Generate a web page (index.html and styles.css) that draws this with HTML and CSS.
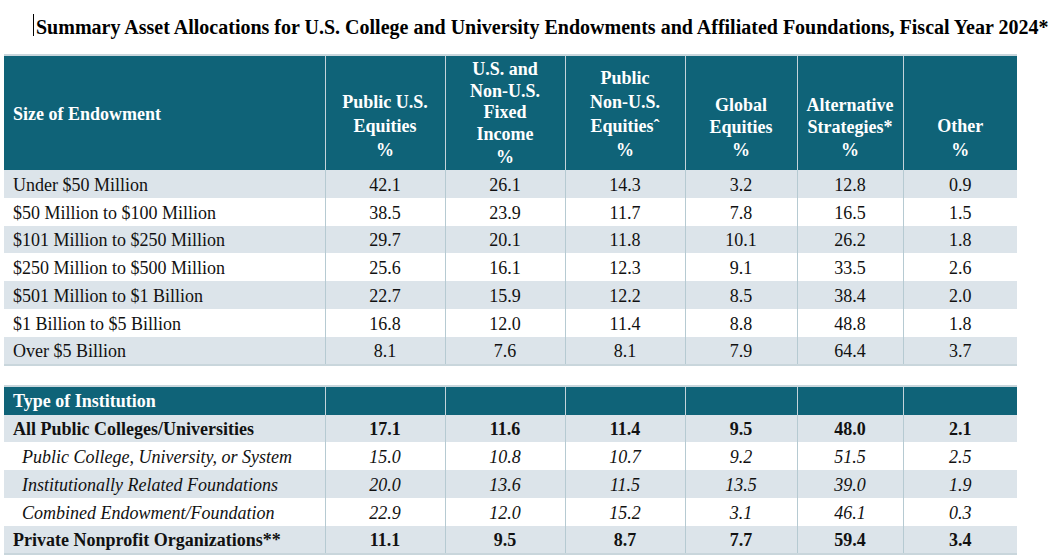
FILE: index.html
```html
<!DOCTYPE html>
<html>
<head>
<meta charset="utf-8">
<link rel="stylesheet" href="styles.css">
</head>
<body>
<div class="page">
  <h1 class="title"><span class="caret"></span>Summary Asset Allocations for U.S. College and University Endowments and Affiliated Foundations, Fiscal Year 2024*</h1>

  <table class="grid">
    <colgroup>
      <col class="c0"><col class="c1"><col class="c2"><col class="c3"><col class="c4"><col class="c5"><col class="c6">
    </colgroup>
    <thead>
      <tr class="head">
        <th class="first mid">Size of Endowment</th>
        <th><div class="lbl">Public U.S.<br>Equities</div><div class="pct">%</div></th>
        <th class="fi"><div class="lbl">U.S. and<br>Non-U.S.<br>Fixed<br>Income</div><div class="pct">%</div></th>
        <th><div class="lbl">Public<br>Non-U.S.<br>Equitiesˆ</div><div class="pct">%</div></th>
        <th><div class="lbl tight">Global<br>Equities</div><div class="pct">%</div></th>
        <th><div class="lbl tight">Alternative<br>Strategies*</div><div class="pct">%</div></th>
        <th><div class="lbl">Other</div><div class="pct">%</div></th>
      </tr>
    </thead>
    <tbody>
      <tr class="shade"><td class="first">Under $50 Million</td><td>42.1</td><td>26.1</td><td>14.3</td><td>3.2</td><td>12.8</td><td>0.9</td></tr>
      <tr><td class="first">$50 Million to $100 Million</td><td>38.5</td><td>23.9</td><td>11.7</td><td>7.8</td><td>16.5</td><td>1.5</td></tr>
      <tr class="shade"><td class="first">$101 Million to $250 Million</td><td>29.7</td><td>20.1</td><td>11.8</td><td>10.1</td><td>26.2</td><td>1.8</td></tr>
      <tr><td class="first">$250 Million to $500 Million</td><td>25.6</td><td>16.1</td><td>12.3</td><td>9.1</td><td>33.5</td><td>2.6</td></tr>
      <tr class="shade"><td class="first">$501 Million to $1 Billion</td><td>22.7</td><td>15.9</td><td>12.2</td><td>8.5</td><td>38.4</td><td>2.0</td></tr>
      <tr><td class="first">$1 Billion to $5 Billion</td><td>16.8</td><td>12.0</td><td>11.4</td><td>8.8</td><td>48.8</td><td>1.8</td></tr>
      <tr class="shade"><td class="first">Over $5 Billion</td><td>8.1</td><td>7.6</td><td>8.1</td><td>7.9</td><td>64.4</td><td>3.7</td></tr>
    </tbody>
  </table>

  <table class="grid second">
    <colgroup>
      <col class="c0"><col class="c1"><col class="c2"><col class="c3"><col class="c4"><col class="c5"><col class="c6">
    </colgroup>
    <thead>
      <tr class="subhead">
        <th class="first">Type of Institution</th><th></th><th></th><th></th><th></th><th></th><th></th>
      </tr>
    </thead>
    <tbody>
      <tr class="shade strong"><td class="first">All Public Colleges/Universities</td><td>17.1</td><td>11.6</td><td>11.4</td><td>9.5</td><td>48.0</td><td>2.1</td></tr>
      <tr class="sub"><td class="first">Public College, University, or System</td><td>15.0</td><td>10.8</td><td>10.7</td><td>9.2</td><td>51.5</td><td>2.5</td></tr>
      <tr class="shade sub"><td class="first">Institutionally Related Foundations</td><td>20.0</td><td>13.6</td><td>11.5</td><td>13.5</td><td>39.0</td><td>1.9</td></tr>
      <tr class="sub"><td class="first">Combined Endowment/Foundation</td><td>22.9</td><td>12.0</td><td>15.2</td><td>3.1</td><td>46.1</td><td>0.3</td></tr>
      <tr class="shade strong"><td class="first">Private Nonprofit Organizations**</td><td>11.1</td><td>9.5</td><td>8.7</td><td>7.7</td><td>59.4</td><td>3.4</td></tr>
    </tbody>
  </table>
</div>
</body>
</html>
```

FILE: styles.css
```css
html, body {
  margin: 0;
  padding: 0;
  background: #ffffff;
}

.page {
  padding: 0 0 0 4px;
  font-family: "Liberation Serif", "Times New Roman", serif;
  color: #111111;
}

.title {
  margin: 0 0 16px 29px;
  padding-top: 16px;
  font-size: 20px;
  line-height: 22px;
  font-weight: bold;
  white-space: nowrap;
  color: #000000;
}

.caret {
  display: inline-block;
  width: 1px;
  height: 22px;
  background: #000000;
  vertical-align: top;
  margin-top: -2px;
  margin-right: 2px;
}

.grid {
  border-collapse: collapse;
  table-layout: fixed;
  width: 1013px;
  font-size: 18px;
  border-top: 2px solid #c9d6dc;
  border-bottom: 2px solid #c9d6dc;
}

.second {
  margin-top: 19px;
}

.c0 { width: 321px; }
.c1 { width: 120px; }
.c2 { width: 120px; }
.c3 { width: 120px; }
.c4 { width: 112px; }
.c5 { width: 106px; }
.c6 { width: 114px; }

.grid th,
.grid td {
  border-left: 1px solid #b6cad2;
  padding: 0;
  text-align: center;
}

.grid th:first-child,
.grid td:first-child {
  border-left: none;
}

.head th {
  height: 106px;
  background: #0f6378;
  color: #ffffff;
  font-weight: bold;
  vertical-align: bottom;
  padding-bottom: 8px;
  border-left-color: #c3d3da;
}

.head th.mid {
  vertical-align: middle;
  padding-bottom: 0;
  padding-top: 2px;
}

.lbl {
  line-height: 24px;
}

.lbl.tight {
  line-height: 22px;
}

.pct {
  line-height: 24px;
}

.head th.fi {
  padding-bottom: 1px;
}

.head th.fi .lbl {
  line-height: 21.5px;
}

.grid th.first,
.grid td.first {
  text-align: left;
  padding-left: 9px;
}

.grid td {
  height: 27.8px;
  line-height: 20px;
  vertical-align: middle;
  padding-top: 2px;
  box-sizing: border-box;
}

.shade td {
  background: #dce4ea;
}

.subhead th {
  height: 28px;
  background: #0f6378;
  color: #ffffff;
  font-weight: bold;
  line-height: 20px;
  border-left-color: #c3d3da;
}

.strong td {
  font-weight: bold;
}

.sub td {
  font-style: italic;
}

.sub td.first {
  padding-left: 18px;
}
```
